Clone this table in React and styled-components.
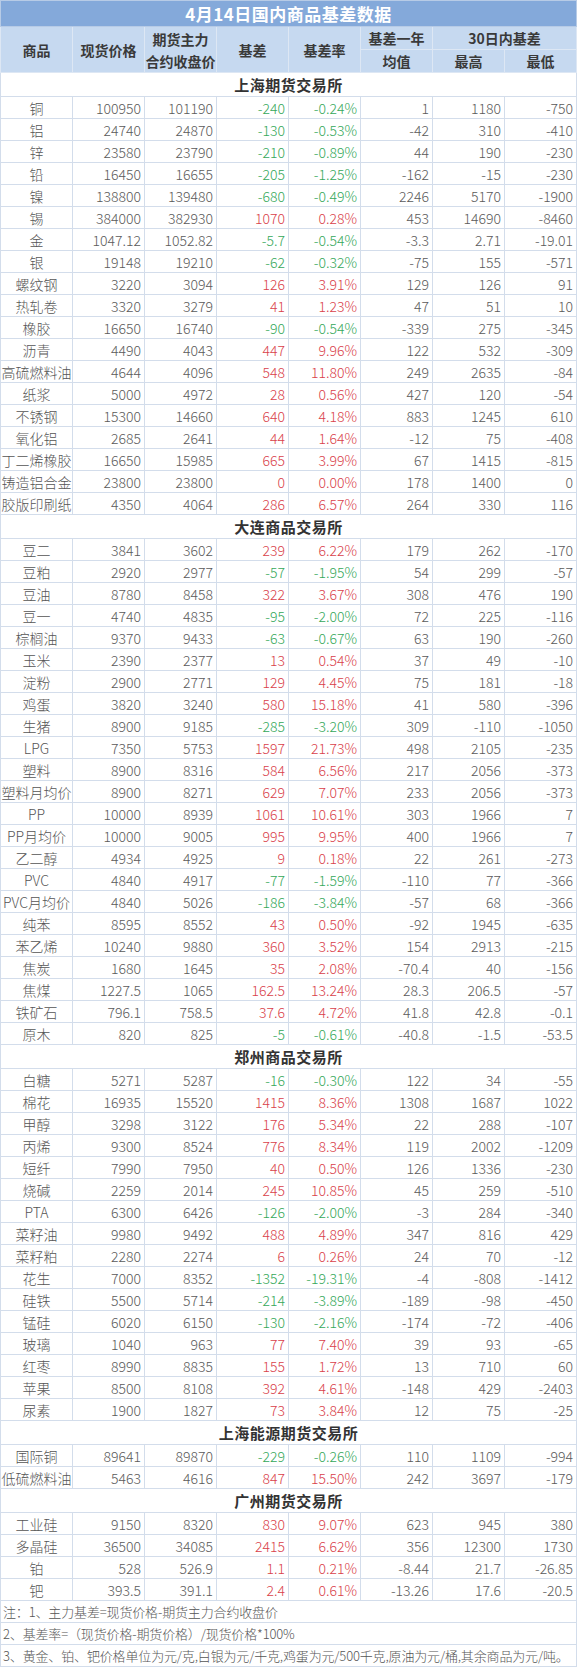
import React from "react";
import styled, { createGlobalStyle } from "styled-components";

const Global = createGlobalStyle`
  html, body { margin: 0; padding: 0; background: #ffffff; }
  body { font-family: "Noto Sans CJK SC", "Noto Sans", sans-serif; }
`;

const Table = styled.table`
  width: 576px;
  border-collapse: collapse;
  table-layout: fixed;
  font-family: "Noto Sans CJK SC", "Noto Sans", sans-serif;
  font-size: 14px;
  color: #5a5a5a;
`;

const Col = styled.col`
  width: 72px;
`;

const TitleCell = styled.th`
  height: 24px;
  padding: 0;
  background: #84a9da;
  color: #ffffff;
  font-size: 17px;
  font-weight: 700;
  text-align: center;
  border: 1px solid #b7cbe6;
  letter-spacing: 0.5px;
`;

const HeadCell = styled.th`
  height: ${(p) => (p.$tall ? "44px" : "22px")};
  padding: 0;
  background: #c6d9f0;
  color: #3a3a3a;
  font-size: 14px;
  font-weight: 700;
  text-align: center;
  line-height: 22px;
  border: 1px solid #dde7f4;
`;

const SectionCell = styled.td`
  height: 23px;
  padding: 0;
  text-align: center;
  font-size: 15px;
  font-weight: 700;
  color: #333333;
  border: 1px solid #d3ddeb;
  letter-spacing: 0.5px;
`;

const Row = styled.tr`
  height: 22px;
`;

const NameCell = styled.td`
  padding: 0;
  text-align: center;
  color: #555555;
  font-weight: 300;
  white-space: nowrap;
  border: 1px solid #d3ddeb;
`;

const NumCell = styled.td`
  padding: 0 3px 0 0;
  text-align: right;
  font-weight: 300;
  color: ${(p) => (p.$tone === "up" ? "#d9414a" : p.$tone === "down" ? "#35a85a" : "#5a5a5a")};
  white-space: nowrap;
  border: 1px solid #d3ddeb;
`;

const NoteCell = styled.td`
  height: 21px;
  padding: 0 0 0 2px;
  text-align: left;
  font-size: 13px;
  letter-spacing: -0.15px;
  font-weight: 300;
  color: #555555;
  white-space: nowrap;
  overflow: hidden;
  border: 1px solid #d3ddeb;
`;

const sections = [
  {
    name: "上海期货交易所",
    rows: [
      ["铜", "100950", "101190", "-240", "-0.24%", "1", "1180", "-750"],
      ["铝", "24740", "24870", "-130", "-0.53%", "-42", "310", "-410"],
      ["锌", "23580", "23790", "-210", "-0.89%", "44", "190", "-230"],
      ["铅", "16450", "16655", "-205", "-1.25%", "-162", "-15", "-230"],
      ["镍", "138800", "139480", "-680", "-0.49%", "2246", "5170", "-1900"],
      ["锡", "384000", "382930", "1070", "0.28%", "453", "14690", "-8460"],
      ["金", "1047.12", "1052.82", "-5.7", "-0.54%", "-3.3", "2.71", "-19.01"],
      ["银", "19148", "19210", "-62", "-0.32%", "-75", "155", "-571"],
      ["螺纹钢", "3220", "3094", "126", "3.91%", "129", "126", "91"],
      ["热轧卷", "3320", "3279", "41", "1.23%", "47", "51", "10"],
      ["橡胶", "16650", "16740", "-90", "-0.54%", "-339", "275", "-345"],
      ["沥青", "4490", "4043", "447", "9.96%", "122", "532", "-309"],
      ["高硫燃料油", "4644", "4096", "548", "11.80%", "249", "2635", "-84"],
      ["纸浆", "5000", "4972", "28", "0.56%", "427", "120", "-54"],
      ["不锈钢", "15300", "14660", "640", "4.18%", "883", "1245", "610"],
      ["氧化铝", "2685", "2641", "44", "1.64%", "-12", "75", "-408"],
      ["丁二烯橡胶", "16650", "15985", "665", "3.99%", "67", "1415", "-815"],
      ["铸造铝合金", "23800", "23800", "0", "0.00%", "178", "1400", "0"],
      ["胶版印刷纸", "4350", "4064", "286", "6.57%", "264", "330", "116"],
    ],
  },
  {
    name: "大连商品交易所",
    rows: [
      ["豆二", "3841", "3602", "239", "6.22%", "179", "262", "-170"],
      ["豆粕", "2920", "2977", "-57", "-1.95%", "54", "299", "-57"],
      ["豆油", "8780", "8458", "322", "3.67%", "308", "476", "190"],
      ["豆一", "4740", "4835", "-95", "-2.00%", "72", "225", "-116"],
      ["棕榈油", "9370", "9433", "-63", "-0.67%", "63", "190", "-260"],
      ["玉米", "2390", "2377", "13", "0.54%", "37", "49", "-10"],
      ["淀粉", "2900", "2771", "129", "4.45%", "75", "181", "-18"],
      ["鸡蛋", "3820", "3240", "580", "15.18%", "41", "580", "-396"],
      ["生猪", "8900", "9185", "-285", "-3.20%", "309", "-110", "-1050"],
      ["LPG", "7350", "5753", "1597", "21.73%", "498", "2105", "-235"],
      ["塑料", "8900", "8316", "584", "6.56%", "217", "2056", "-373"],
      ["塑料月均价", "8900", "8271", "629", "7.07%", "233", "2056", "-373"],
      ["PP", "10000", "8939", "1061", "10.61%", "303", "1966", "7"],
      ["PP月均价", "10000", "9005", "995", "9.95%", "400", "1966", "7"],
      ["乙二醇", "4934", "4925", "9", "0.18%", "22", "261", "-273"],
      ["PVC", "4840", "4917", "-77", "-1.59%", "-110", "77", "-366"],
      ["PVC月均价", "4840", "5026", "-186", "-3.84%", "-57", "68", "-366"],
      ["纯苯", "8595", "8552", "43", "0.50%", "-92", "1945", "-635"],
      ["苯乙烯", "10240", "9880", "360", "3.52%", "154", "2913", "-215"],
      ["焦炭", "1680", "1645", "35", "2.08%", "-70.4", "40", "-156"],
      ["焦煤", "1227.5", "1065", "162.5", "13.24%", "28.3", "206.5", "-57"],
      ["铁矿石", "796.1", "758.5", "37.6", "4.72%", "41.8", "42.8", "-0.1"],
      ["原木", "820", "825", "-5", "-0.61%", "-40.8", "-1.5", "-53.5"],
    ],
  },
  {
    name: "郑州商品交易所",
    rows: [
      ["白糖", "5271", "5287", "-16", "-0.30%", "122", "34", "-55"],
      ["棉花", "16935", "15520", "1415", "8.36%", "1308", "1687", "1022"],
      ["甲醇", "3298", "3122", "176", "5.34%", "22", "288", "-107"],
      ["丙烯", "9300", "8524", "776", "8.34%", "119", "2002", "-1209"],
      ["短纤", "7990", "7950", "40", "0.50%", "126", "1336", "-230"],
      ["烧碱", "2259", "2014", "245", "10.85%", "45", "259", "-510"],
      ["PTA", "6300", "6426", "-126", "-2.00%", "-3", "284", "-340"],
      ["菜籽油", "9980", "9492", "488", "4.89%", "347", "816", "429"],
      ["菜籽粕", "2280", "2274", "6", "0.26%", "24", "70", "-12"],
      ["花生", "7000", "8352", "-1352", "-19.31%", "-4", "-808", "-1412"],
      ["硅铁", "5500", "5714", "-214", "-3.89%", "-189", "-98", "-450"],
      ["锰硅", "6020", "6150", "-130", "-2.16%", "-174", "-72", "-406"],
      ["玻璃", "1040", "963", "77", "7.40%", "39", "93", "-65"],
      ["红枣", "8990", "8835", "155", "1.72%", "13", "710", "60"],
      ["苹果", "8500", "8108", "392", "4.61%", "-148", "429", "-2403"],
      ["尿素", "1900", "1827", "73", "3.84%", "12", "75", "-25"],
    ],
  },
  {
    name: "上海能源期货交易所",
    rows: [
      ["国际铜", "89641", "89870", "-229", "-0.26%", "110", "1109", "-994"],
      ["低硫燃料油", "5463", "4616", "847", "15.50%", "242", "3697", "-179"],
    ],
  },
  {
    name: "广州期货交易所",
    rows: [
      ["工业硅", "9150", "8320", "830", "9.07%", "623", "945", "380"],
      ["多晶硅", "36500", "34085", "2415", "6.62%", "356", "12300", "1730"],
      ["铂", "528", "526.9", "1.1", "0.21%", "-8.44", "21.7", "-26.85"],
      ["钯", "393.5", "391.1", "2.4", "0.61%", "-13.26", "17.6", "-20.5"],
    ],
  },
];

const notes = [
  "注：1、主力基差=现货价格-期货主力合约收盘价",
  "2、基差率=（现货价格-期货价格）/现货价格*100%",
  "3、黄金、铂、钯价格单位为元/克,白银为元/千克,鸡蛋为元/500千克,原油为元/桶,其余商品为元/吨。",
];

function DataRow({ r }) {
  const tone = r[3].startsWith("-") ? "down" : "up";
  return (
    <Row>
      <NameCell>{r[0]}</NameCell>
      <NumCell>{r[1]}</NumCell>
      <NumCell>{r[2]}</NumCell>
      <NumCell $tone={tone}>{r[3]}</NumCell>
      <NumCell $tone={tone}>{r[4]}</NumCell>
      <NumCell>{r[5]}</NumCell>
      <NumCell>{r[6]}</NumCell>
      <NumCell>{r[7]}</NumCell>
    </Row>
  );
}

export default function App() {
  return (
    <>
      <Global />
      <Table>
        <colgroup>
          {Array.from({ length: 8 }).map((_, i) => (
            <Col key={i} />
          ))}
        </colgroup>
        <thead>
          <tr>
            <TitleCell colSpan={8}>4月14日国内商品基差数据</TitleCell>
          </tr>
          <tr>
            <HeadCell rowSpan={2} $tall>商品</HeadCell>
            <HeadCell rowSpan={2} $tall>现货价格</HeadCell>
            <HeadCell rowSpan={2} $tall>
              期货主力
              <br />
              合约收盘价
            </HeadCell>
            <HeadCell rowSpan={2} $tall>基差</HeadCell>
            <HeadCell rowSpan={2} $tall>基差率</HeadCell>
            <HeadCell>基差一年</HeadCell>
            <HeadCell colSpan={2}>30日内基差</HeadCell>
          </tr>
          <tr>
            <HeadCell>均值</HeadCell>
            <HeadCell>最高</HeadCell>
            <HeadCell>最低</HeadCell>
          </tr>
        </thead>
        <tbody>
          {sections.map((s) => (
            <React.Fragment key={s.name}>
              <tr>
                <SectionCell colSpan={8}>{s.name}</SectionCell>
              </tr>
              {s.rows.map((r) => (
                <DataRow key={r[0]} r={r} />
              ))}
            </React.Fragment>
          ))}
          {notes.map((n) => (
            <tr key={n}>
              <NoteCell colSpan={8}>{n}</NoteCell>
            </tr>
          ))}
        </tbody>
      </Table>
    </>
  );
}
